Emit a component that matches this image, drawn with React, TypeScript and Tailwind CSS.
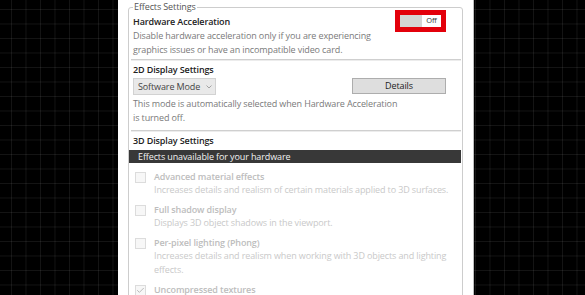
import { Check } from "lucide-react";

const items = [
  {
    title: "Advanced material effects",
    desc: ["Increases details and realism of certain materials applied to 3D surfaces."],
    checked: false,
  },
  {
    title: "Full shadow display",
    desc: ["Displays 3D object shadows in the viewport."],
    checked: false,
  },
  {
    title: "Per-pixel lighting (Phong)",
    desc: [
      "Increases details and realism when working with 3D objects and lighting",
      "effects.",
    ],
    checked: false,
  },
  {
    title: "Uncompressed textures",
    desc: [],
    checked: true,
  },
];

const Divider = () => (
  <div className="-ml-[2px] -mr-[3px] h-[2px] border-t border-[#cfcfcf] border-b border-b-[#ececec]" />
);

export default function App() {
  return (
    <div className="flex h-[295px] w-[585px] overflow-hidden bg-black bg-[linear-gradient(to_right,rgba(255,255,255,0.08)_1px,transparent_1px),linear-gradient(to_bottom,rgba(255,255,255,0.08)_1px,transparent_1px)] bg-[size:14.5px_14.5px] bg-[position:11px_9px] font-['Open_Sans',sans-serif] tracking-[-0.12px]">
      <div className="w-[118px] shrink-0" />

      <div className="h-full w-[356px] shrink-0 overflow-hidden border-r border-[#bdbdbd] bg-white pl-[10px] pr-[10px] pt-[1px]">
        <fieldset className="min-h-[320px] rounded-[3px] border border-[#cdcdcd] px-[4px]">
          <legend className="px-[1px] text-[9px] leading-[12px] text-[#555]">Effects Settings</legend>

          {/* hardware acceleration */}
          <div className="flex items-start justify-between">
            <div className="mt-[2px]">
              <div className="text-[9px] font-semibold leading-[14px] text-[#222]">Hardware Acceleration</div>
              <div className="text-[9px] leading-[14px] text-[#7a7a7a]">
                Disable hardware acceleration only if you are experiencing
                <br />
                graphics issues or have an incompatible video card.
              </div>
            </div>
            <div className="-mt-[3px] mr-[12px] flex h-[22px] w-[51px] bg-[#e3000b] p-[5px]">
              <div className="w-[22px] bg-[#d4d4d4]" />
              <div className="flex flex-1 items-center justify-center bg-white text-[7.5px] leading-none text-[#333]">
                Off
              </div>
            </div>
          </div>

          <div className="mt-[2px]">
            <Divider />
          </div>

          {/* 2D */}
          <div className="mt-[2px] text-[9px] font-semibold leading-[14px] text-[#222]">2D Display Settings</div>
          <div className="mt-[1px] flex items-start justify-between pr-[12px]">
            <div className="flex h-[17px] w-[83px] items-center border border-[#d2d2d2] bg-[#e9e9e9] pl-[4px] text-[9px] whitespace-nowrap text-[#444]">
              <span>Software Mode</span>
              <svg width="6" height="4" viewBox="0 0 6 4" className="ml-[6px] text-[#9a9a9a]">
                <path d="M0.5 0.5 L3 3 L5.5 0.5" fill="none" stroke="currentColor" strokeWidth="0.9" />
              </svg>
            </div>
            <div className="flex h-[16px] w-[94px] items-center justify-center border border-[#adadad] bg-[#dedede] text-[9px] text-[#222]">
              Details
            </div>
          </div>
          <div className="mt-[2px] text-[9px] leading-[14px] text-[#7a7a7a]">
            This mode is automatically selected when Hardware Acceleration
            <br />
            is turned off.
          </div>

          <div className="mt-[5px]">
            <Divider />
          </div>

          {/* 3D */}
          <div className="mt-[2px] text-[9px] font-semibold leading-[14px] text-[#222]">3D Display Settings</div>
          <div className="-ml-[4px] -mr-[3px] mt-[2px] flex h-[13px] items-center bg-[#383838] pl-[9px] text-[9px] leading-none text-[#f2f2f2]">
            Effects unavailable for your hardware
          </div>

          <div className="mt-[7px] flex flex-col gap-[6px]">
            {items.map((item) => (
              <div key={item.title} className="flex items-start">
                <div className="ml-[2px] mt-[2px] flex h-[11px] w-[11px] shrink-0 items-center justify-center border border-[#dcdcdc] bg-[#f7f7f7]">
                  {item.checked && <Check size={9} strokeWidth={2.5} className="text-[#b5b5b5]" />}
                </div>
                <div className="ml-[8px]">
                  <div className="text-[9px] font-semibold leading-[13px] text-[#bdbdbd]">{item.title}</div>
                  {item.desc.map((line) => (
                    <div key={line} className="text-[9px] leading-[14px] text-[#c9c9c9]">
                      {line}
                    </div>
                  ))}
                </div>
              </div>
            ))}
          </div>
        </fieldset>
      </div>

      <div className="flex-1" />
    </div>
  );
}
